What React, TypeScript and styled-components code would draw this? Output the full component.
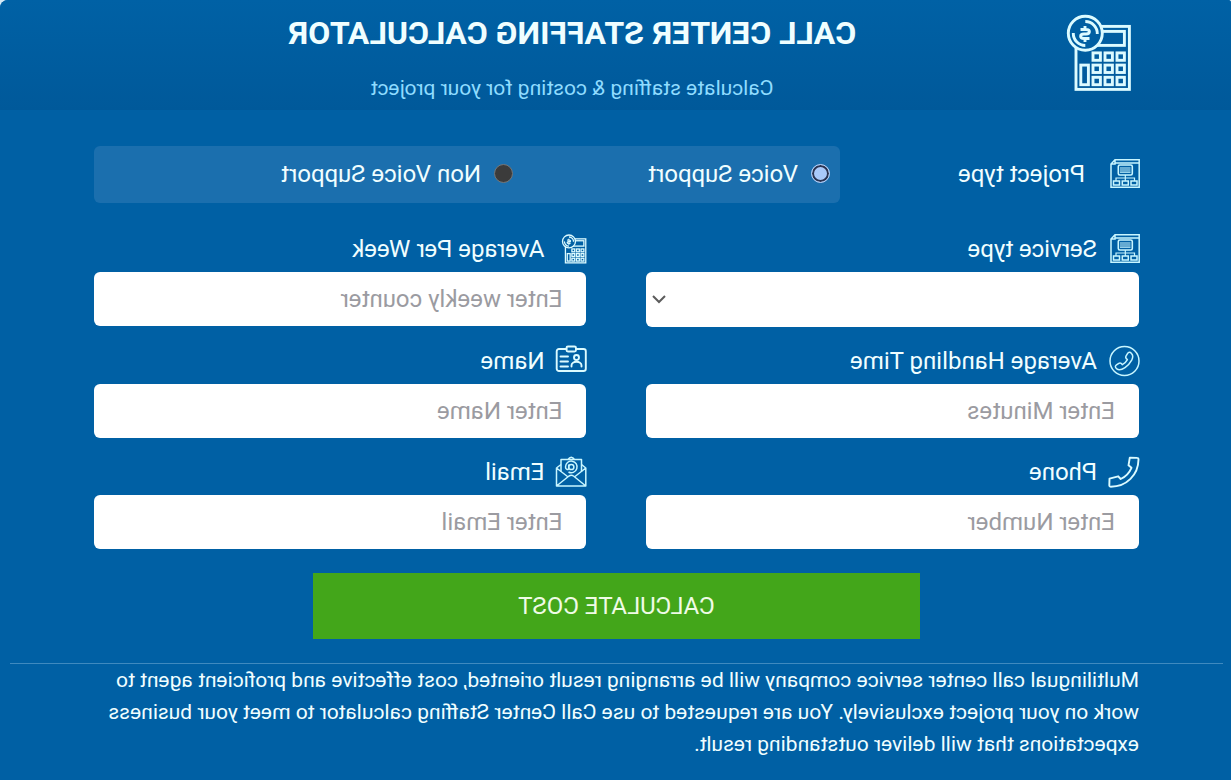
import React from 'react';
import styled, { createGlobalStyle } from 'styled-components';

const GlobalStyle = createGlobalStyle`
  *, *::before, *::after { box-sizing: border-box; }
  html { background: #0060a4; }
  body { margin: 0; background: #d6e9f5; font-family: Roboto, "Liberation Sans", sans-serif; }
`;

/* The whole calculator is shown mirrored, left to right. */
const Page = styled.main`
  min-height: 100vh;
  background: #0060a4;
  color: #f0feff;
  border-radius: 3px 8px 0 0;
  overflow: hidden;
  transform: scaleX(-1);
`;

const Header = styled.header`
  display: flex;
  align-items: flex-start;
  height: 110px;
  padding: 14px 94px 0 98px;
  background: linear-gradient(#0061a5, #00599a);
`;

const HeaderIcon = styled.svg`
  flex: none;
  width: 67px;
  height: 78px;
`;

const Heading = styled.div`
  flex: 1;
  padding-left: 16px;
  text-align: center;
`;

const Title = styled.h1`
  margin: 0;
  font-size: 32px;
  line-height: 38px;
  font-weight: 700;
`;

const Subtitle = styled.p`
  margin: 24px 0 0;
  font-size: 21px;
  line-height: 24px;
  color: #8fdcff;
`;

const Form = styled.form`
  padding: 36px 94px 24px 92px;
`;

const ProjectRow = styled.fieldset`
  display: flex;
  align-items: center;
  margin: 0 0 34px;
  padding: 0;
  border: 0;
`;

const ProjectLabel = styled.div`
  display: flex;
  align-items: center;
  gap: 22px;
  width: 299px;
  font-size: 24px;
  line-height: 32px;
  padding-bottom: 2px;
`;

const RadioPanel = styled.div`
  flex: 1;
  display: grid;
  grid-template-columns: 317px 1fr;
  align-items: center;
  height: 57px;
  padding: 0 0 2px 10px;
  border-radius: 6px;
  background: #1b6fae;
`;

const RadioLabel = styled.label`
  display: flex;
  align-items: center;
  gap: 13px;
  font-size: 24px;
  line-height: 32px;
`;

const Radio = styled.input`
  appearance: none;
  width: 19px;
  height: 19px;
  margin: 0;
  border: 1px solid #767676;
  border-radius: 50%;
  background: #3b3b3b;
  &:checked {
    border-color: #b4cdf5;
    background: #a9c9fa;
    box-shadow: inset 0 0 0 2px #2b3350;
  }
`;

const Fields = styled.div`
  display: grid;
  grid-template-columns: 1fr 1fr;
  column-gap: 60px;
  row-gap: 22px;
`;

const FieldLabel = styled.label`
  display: flex;
  align-items: flex-start;
  gap: 10px;
  height: 35px;
  font-size: 24px;
  line-height: 24px;
  svg { margin-top: -4px; }
`;

const LabelIcon = styled.svg`
  flex: none;
  width: 32px;
  height: 32px;
  overflow: visible;
`;

const TextField = styled.input`
  display: block;
  width: 100%;
  height: 54px;
  padding: 0 24px;
  border: 0;
  border-radius: 6px;
  background: #fff;
  color: #333;
  font: 24px/32px Roboto, "Liberation Sans", sans-serif;
  &::placeholder { color: #9b9ba1; opacity: 1; }
`;

const SelectBox = styled.div`
  display: grid;
  align-items: center;
  & > * { grid-area: 1 / 1; }
`;

const Select = styled.select`
  appearance: none;
  width: 100%;
  height: 55px;
  padding: 0 24px;
  border: 0;
  border-radius: 6px;
  background: #fff;
  color: #333;
  font: 24px/32px Roboto, "Liberation Sans", sans-serif;
`;

const Chevron = styled.svg`
  justify-self: end;
  width: 14px;
  height: 10px;
  margin-right: 6px;
  pointer-events: none;
`;

const Submit = styled.button`
  display: block;
  width: 58%;
  height: 66px;
  margin: 24px auto 0;
  border: 0;
  background: #43a61a;
  color: #effbe6;
  font: 24px/32px Roboto, "Liberation Sans", sans-serif;
`;

const Footer = styled.footer`
  margin: 0 10px 0 8px;
  padding: 0 84px 16px;
  border-top: 1px solid #3f8abf;
  font-size: 21px;
  line-height: 32px;
  p { margin: 0; }
`;

const calculatorShapes = (
  <>
    <rect x="3.6" y="12.4" width="53.4" height="63" />
    <rect x="8.6" y="17.4" width="28" height="14" />
    {[38.9, 51.1, 63.3].map((y) =>
      [8.6, 20.6, 32.6].map((x) => <rect key={`${x}-${y}`} x={x} y={y} width="7.4" height="7.4" />)
    )}
    <rect x="44.6" y="51.1" width="7.6" height="19.6" />
  </>
);

const Calculator = ({ coin, weight }: { coin: string; weight: number }) => (
  <g fill="none" stroke="#dcfbff" strokeWidth={weight}>
    {calculatorShapes}
    <circle cx="47.7" cy="19.3" r="17" fill={coin} />
    <path d="M35.700 20a12 12 0 0 1 12-12.500M59.700 19a12 12 0 0 1-12 12.500" />
    <path d="M52.500 15.500h-5.500c-4.500 0-4.500 4.500 0 4.500h2c4.500 0 4.500 4.500 0 4.500h-5.500M48 12v3.500M48 24.500v3.500" />
  </g>
);

const ProjectIcon = () => (
  <LabelIcon viewBox="1 0 32 32" aria-hidden="true" fill="none" stroke="#c8f6ff">
    <path strokeWidth="1.500" d="M.8 1.700H25L29 6V29.300H.8ZM25 1.700V6H29M.8 5H25" />
    <rect x="7.700" y="7" width="14" height="10" rx="1.500" strokeWidth="1.600" />
    <path strokeWidth="1.200" d="M9.500 10h10.500M9.500 12h10.500M9.500 14.200h10.500M14.700 17v6M5.500 23v-3h18.500v3" />
    <path d="M3 23h6v4h-6zM11.700 23h6v4h-6zM20.500 23h6v4h-6z" strokeWidth="1.500" />
  </LabelIcon>
);

const CalculatorIcon = () => (
  <LabelIcon viewBox="3 0 84 84" aria-hidden="true">
    <g transform="translate(0 3)"><Calculator coin="#0060a4" weight={3.4} /></g>
  </LabelIcon>
);

const PhoneIcon = () => (
  <LabelIcon viewBox="1 0 32 32" aria-hidden="true" fill="none" stroke="#dcfbff" strokeWidth="1.900" strokeLinejoin="round">
    <path d="M2.800 1.900 10.200 1.600 11.500 9.300 8.500 11.800C10.500 16.500 14.500 20.700 19.300 23L21.800 20.300 30.500 22.700 30.700 29.600C30.700 30.400 30.200 30.800 29.200 30.800 13.500 30.500 1.700 19 1.500 3.500 1.500 2.500 1.900 1.900 2.800 1.900Z" />
  </LabelIcon>
);

const HandlingIcon = () => (
  <LabelIcon viewBox="1 0 32 32" aria-hidden="true" fill="none" stroke="#c8f6ff" strokeWidth="1.500" strokeLinejoin="round">
    <circle cx="15.500" cy="16" r="14.500" />
    <path d="M8.500 8.500c1.500-1.700 3-1.500 4 .2l1.500 2.500c.8 1.400.2 2.300-1.400 3.500 1.200 2.200 2.800 3.900 5 5 1.200-1.700 2.200-2.100 3.600-1.300l2.300 1.500c1.600 1.100 1.500 2.500-.3 4-2 1.600-4.800 1-8.200-1.200-3-2-5-4.400-6.700-7.500-1.400-2.700-1.500-4.900.2-6.700Z" />
  </LabelIcon>
);

const NameIcon = () => (
  <LabelIcon viewBox="1 1 32 32" aria-hidden="true" fill="none" stroke="#dcfbff" strokeWidth="1.900" strokeLinecap="round">
    <path d="M11 5H3.500A2.300 2.300 0 0 0 1.200 7.300V24.700A2.300 2.300 0 0 0 3.500 27H28A2.300 2.300 0 0 0 30.300 24.700V7.300A2.300 2.300 0 0 0 28 5H20.500" />
    <rect x="11" y="2.500" width="9.500" height="5" rx="1.500" />
    <circle cx="10.500" cy="13.500" r="2.500" />
    <path d="M5.500 22.500v-1c0-5 10-5 10 0v1M19 12.500h7.500M19 17.500h7.500M19 22.500h7.500" />
  </LabelIcon>
);

const EmailIcon = () => (
  <LabelIcon viewBox="1 1 32 32" aria-hidden="true" fill="none" stroke="#c8f6ff" strokeWidth="1.500" strokeLinejoin="round">
    <path d="M5.500 9.500 1.200 13V31H30.500V13L26 9.500M1.200 13 12 21.500M30.500 13 19.500 21.500M1.200 31 13.500 21Q15.700 19.500 18 21L30.500 31" />
    <path d="M5.500 16.500V4.500H26V16.500M12.500 4.500C14.500 1.500 17 1.500 19 4.500" />
    <circle cx="15.700" cy="12" r="2.600" />
    <path d="M18.300 9.500v3.500c0 2.500 3.200 2 3.200-1a5.800 5.800 0 1 0-3 5" />
  </LabelIcon>
);

type FieldProps = { id: string; label: string; placeholder: string; type?: string; icon: React.ReactNode };

const Field = ({ id, label, placeholder, type = 'text', icon }: FieldProps) => (
  <div>
    <FieldLabel htmlFor={id}>{icon}{label}</FieldLabel>
    <TextField id={id} type={type} placeholder={placeholder} />
  </div>
);

export default function App() {
  return (
    <>
      <GlobalStyle />
      <Page>
        <Header>
          <HeaderIcon viewBox="0 0 67 78" aria-hidden="true"><Calculator coin="#005fa2" weight={2.9} /></HeaderIcon>
          <Heading>
            <Title>CALL CENTER STAFFING CALCULATOR</Title>
            <Subtitle>Calculate staffing &amp; costing for your project</Subtitle>
          </Heading>
        </Header>
        <Form onSubmit={(e) => e.preventDefault()}>
          <ProjectRow aria-labelledby="project-type">
            <ProjectLabel id="project-type"><ProjectIcon />Project type</ProjectLabel>
            <RadioPanel>
              <RadioLabel><Radio type="radio" name="project" defaultChecked />Voice Support</RadioLabel>
              <RadioLabel><Radio type="radio" name="project" />Non Voice Support</RadioLabel>
            </RadioPanel>
          </ProjectRow>
          <Fields>
            <div>
              <FieldLabel htmlFor="service"><ProjectIcon />Service type</FieldLabel>
              <SelectBox>
                <Select id="service" defaultValue=""><option value="" /></Select>
                <Chevron viewBox="0 0 14 10" aria-hidden="true" fill="none" stroke="#5c5c5c" strokeWidth="2">
                  <path d="M1 1 7 7 13 1" />
                </Chevron>
              </SelectBox>
            </div>
            <Field id="week" label="Average Per Week" placeholder="Enter weekly counter" icon={<CalculatorIcon />} />
            <Field id="minutes" label="Average Handling Time" placeholder="Enter Minutes" icon={<HandlingIcon />} />
            <Field id="name" label="Name" placeholder="Enter Name" icon={<NameIcon />} />
            <Field id="phone" label="Phone" placeholder="Enter Number" type="tel" icon={<PhoneIcon />} />
            <Field id="email" label="Email" placeholder="Enter Email" type="email" icon={<EmailIcon />} />
          </Fields>
          <Submit type="submit">CALCULATE COST</Submit>
        </Form>
        <Footer>
          <p>
            Multilingual call center service company will be arranging result oriented, cost effective and proficient agent to
            work on your project exclusively. You are requested to use Call Center Staffing calculator to meet your business
            expectations that will deliver outstanding result.
          </p>
        </Footer>
      </Page>
    </>
  );
}
